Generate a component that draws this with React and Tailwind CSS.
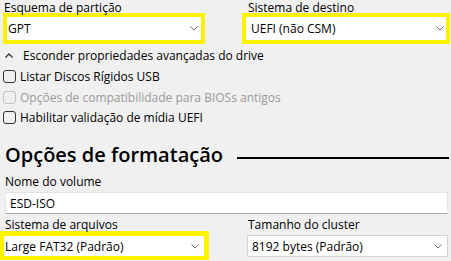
import React from "react";

const font = { fontFamily: '"Open Sans", "Noto Sans", Arial, sans-serif' };

function ChevronDown({ color = "#6b6b6b" }) {
  return (
    <svg width="8" height="5" viewBox="0 0 8 5" className="shrink-0">
      <path d="M0.5 0.5 L4 4 L7.5 0.5" fill="none" stroke={color} strokeWidth="1" />
    </svg>
  );
}

function ChevronUp() {
  return (
    <svg width="8" height="5" viewBox="0 0 8 5" className="shrink-0">
      <path d="M0.5 4.5 L4 1 L7.5 4.5" fill="none" stroke="#333" strokeWidth="1.3" />
    </svg>
  );
}

function Check({ label, disabled }) {
  return (
    <div className="flex items-center">
      <div
        className={
          "ml-[3px] w-[13px] h-[13px] rounded-[3px] border bg-[#f0f0f0] " +
          (disabled ? "border-[#c4c4c4]" : "border-[#333333]")
        }
      />
      <span className={"ml-[4px] " + (disabled ? "text-[#9a9a9a]" : "text-black")}>{label}</span>
    </div>
  );
}

export default function App() {
  return (
    <div
      className="w-[451px] h-[261px] overflow-hidden bg-[#f0f0f0] text-[12px] leading-[13px] text-black pt-[1px]"
      style={font}
    >
      {/* top row */}
      <div className="flex">
        <div className="ml-[3px] w-[202px]">
          <div className="pl-[1px] h-[12px]">Esquema de partição</div>
          <div className="h-[31px] border-4 border-[#fff200] bg-white flex items-center justify-between pl-[1px] pr-[3px]">
            <span>GPT</span>
            <ChevronDown />
          </div>
        </div>
        <div className="ml-[37px] w-[208px]">
          <div className="pl-[6px] h-[12px]">Sistema de destino</div>
          <div className="h-[31px] border-4 border-[#fff200] bg-white flex items-center justify-between pl-[5px] pr-[2px]">
            <span>UEFI (não CSM)</span>
            <ChevronDown />
          </div>
        </div>
      </div>

      {/* advanced toggle */}
      <div className="h-[22px] flex items-center">
        <div className="ml-[5px] flex items-center">
          <ChevronUp />
        </div>
        <span className="ml-[10px]">Esconder propriedades avançadas do drive</span>
      </div>

      <div className="h-[21px] flex items-center">
        <Check label="Listar Discos Rígidos USB" />
      </div>
      <div className="h-[20px] flex items-center">
        <Check label="Opções de compatibilidade para BIOSs antigos" disabled />
      </div>
      <div className="h-[21px] flex items-center">
        <Check label="Habilitar validação de mídia UEFI" />
      </div>

      {/* heading */}
      <div className="mt-[13px] h-[28px] flex items-start">
        <div className="ml-[5px] text-[20px] leading-[28px] font-semibold">Opções de formatação</div>
        <div className="flex-1 mt-[16px] h-[2px] bg-black ml-[14px] mr-[2px]" />
      </div>

      <div className="mt-[6px] ml-[5px] h-[13px]">Nome do volume</div>
      <div className="mt-[4px] ml-[5px] w-[443px] h-[22px] bg-white border border-[#e4e4e4] border-b-[#a8a8a8] flex items-center pl-[4px]">
        ESD-ISO
      </div>

      {/* bottom row */}
      <div className="mt-[4px] flex">
        <div className="w-[209px]">
          <div className="pl-[5px] h-[13px]">Sistema de arquivos</div>
          <div className="h-[29px] border-l-4 border-r-[5px] border-t-[5px] border-b-4 border-[#fff200] bg-white flex items-center justify-between pl-[1px] pr-[5px]">
            <span>Large FAT32 (Padrão)</span>
            <ChevronDown />
          </div>
        </div>
        <div className="ml-[38px] w-[201px]">
          <div className="pl-[1px] h-[13px]">Tamanho do cluster</div>
          <div className="mt-[4px] h-[22px] border border-[#d4d4d4] bg-white flex items-center justify-between pl-[4px] pr-[5px]">
            <span>8192 bytes (Padrão)</span>
            <ChevronDown />
          </div>
        </div>
      </div>
    </div>
  );
}
